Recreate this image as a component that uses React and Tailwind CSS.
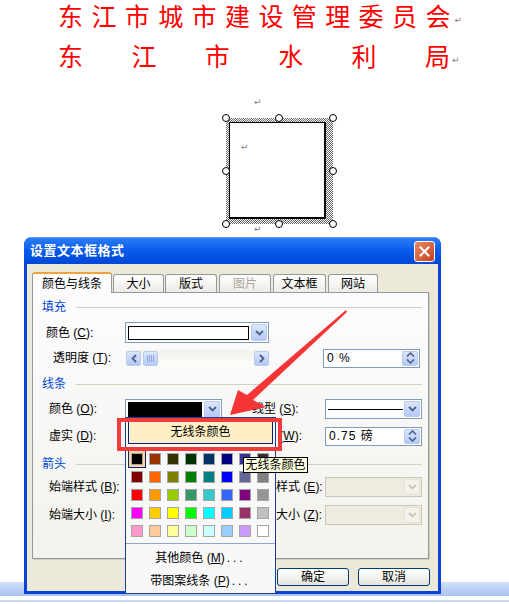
import React from 'react';

const CJK = "font-[family-name:'Liberation_Sans','Noto_Sans_CJK_SC',sans-serif]";

const PALETTE = [
  ['#000000', '#993300', '#333300', '#003300', '#003366', '#000080', '#333399', '#333333'],
  ['#800000', '#FF6600', '#808000', '#008000', '#008080', '#0000FF', '#666699', '#808080'],
  ['#FF0000', '#FF9900', '#99CC00', '#339966', '#33CCCC', '#3366FF', '#800080', '#969696'],
  ['#FF00FF', '#FFCC00', '#FFFF00', '#00FF00', '#00FFFF', '#00CCFF', '#993366', '#C0C0C0'],
  ['#FF99CC', '#FFCC99', '#FFFF99', '#CCFFCC', '#CCFFFF', '#99CCFF', '#CC99FF', '#FFFFFF'],
];

function Ret({ className = '' }) {
  return (
    <span className={`font-[family-name:'DejaVu_Sans',sans-serif] text-[9px] leading-none text-[#808080] ${className}`}>↵</span>
  );
}

function Chevron({ disabled }) {
  return (
    <svg width="9" height="6" viewBox="0 0 9 6">
      <path d="M1 1 L4.5 4.5 L8 1" fill="none" stroke={disabled ? '#C9C7BA' : '#4D6185'} strokeWidth="1.8" />
    </svg>
  );
}

function DropBtn({ disabled }) {
  return (
    <div
      className={`w-[16px] h-full rounded-[2px] border flex items-center justify-center ${
        disabled
          ? 'border-[#E3E1D5] bg-[#F3F2EC]'
          : 'border-[#BAC9EE] bg-gradient-to-b from-[#DCE7FE] to-[#B3C8F7]'
      }`}
    >
      <Chevron disabled={disabled} />
    </div>
  );
}

function SpinBtn() {
  return (
    <div className="w-[16px] h-full rounded-[2px] border border-[#BAC9EE] bg-gradient-to-b from-[#DCE7FE] to-[#B3C8F7] flex flex-col items-center justify-center gap-[2px]">
      <svg width="9" height="5" viewBox="0 0 9 5"><path d="M1 4.5 L4.5 1 L8 4.5" fill="none" stroke="#4D6185" strokeWidth="1.6" /></svg>
      <svg width="9" height="5" viewBox="0 0 9 5"><path d="M1 0.5 L4.5 4 L8 0.5" fill="none" stroke="#4D6185" strokeWidth="1.6" /></svg>
    </div>
  );
}

function Label({ text, k, className = '' }) {
  return (
    <span className={`text-[12px] text-black whitespace-nowrap ${className}`}>
      {text} (<u>{k}</u>):
    </span>
  );
}

function Section({ title }) {
  return (
    <div className="flex items-center h-[16px]">
      <span className="text-[12px] text-[#0046D5]">{title}</span>
      <div className="flex-1 h-px bg-[#D0D0BF] ml-[10px]" />
    </div>
  );
}

function Combo({ w, disabled, children }) {
  return (
    <div
      className={`h-[20px] border flex items-stretch p-[1px] ${w} ${
        disabled ? 'border-[#C9C7BA] bg-[#EEEBE0]' : 'border-[#7F9DB9] bg-white'
      }`}
    >
      <div className="flex-1 flex items-center px-[1px]">{children}</div>
      <DropBtn disabled={disabled} />
    </div>
  );
}

function Spin({ value }) {
  return (
    <div className="w-[97px] h-[19px] border border-[#7F9DB9] bg-white flex items-stretch p-[1px]">
      <div className="flex-1 flex items-center pl-[2px] text-[12px] tracking-[1px]">{value}</div>
      <SpinBtn />
    </div>
  );
}

function Tab({ label, w, active, disabled }) {
  if (active) {
    return (
      <div className={`${w} h-[21px] rounded-t-[3px] border border-b-0 border-[#919B9C] border-t-2 border-t-[#F2A23C] bg-[#FCFCFE] relative z-10 -mb-px flex items-center justify-center text-[12px]`}>
        {label}
      </div>
    );
  }
  return (
    <div
      className={`${w} h-[18px] rounded-t-[3px] border border-b-0 border-[#919B9C] bg-gradient-to-b from-white to-[#ECEBE6] flex items-center justify-center text-[12px] ${
        disabled ? 'text-[#ACA899]' : 'text-black'
      }`}
    >
      {label}
    </div>
  );
}

function Dialog() {
  return (
    <div className="absolute left-[24px] top-[237px] w-[417px] h-[357px] rounded-t-[8px] overflow-hidden bg-[#0842D6] flex flex-col">
      {/* title bar */}
      <div className="h-[27px] flex items-center justify-between bg-gradient-to-b from-[#2C7CF5] via-[#0659EC] to-[#0148D6] border-t border-[#5CA0FF]">
        <span className="pl-[6px] text-white font-bold text-[13px] tracking-[0.5px]">设置文本框格式</span>
        <div className="mr-[6px] w-[21px] h-[21px] rounded-[3px] border border-white bg-gradient-to-br from-[#E98866] to-[#C4401B] flex items-center justify-center">
          <svg width="11" height="11" viewBox="0 0 11 11">
            <path d="M1.5 1.5 L9.5 9.5 M9.5 1.5 L1.5 9.5" stroke="white" strokeWidth="2" strokeLinecap="square" />
          </svg>
        </div>
      </div>

      {/* body */}
      <div className="flex-1 mx-[3px] mb-[3px] bg-[#ECE9D8] pt-[7px] px-[5px]">
        <div className="flex items-end gap-[1px] h-[21px]">
          <Tab label="颜色与线条" w="w-[80px]" active />
          <Tab label="大小" w="w-[51px]" />
          <Tab label="版式" w="w-[52px]" />
          <Tab label="图片" w="w-[52px] ml-[1px]" disabled />
          <Tab label="文本框" w="w-[53px] ml-[1px]" />
          <Tab label="网站" w="w-[50px] ml-[1px]" />
        </div>

        <div className="h-[267px] w-[397px] border border-[#919B9C] bg-gradient-to-b from-[#FCFCFE] to-[#F3F2EC] shadow-[1px_1px_0_#D0CEBF] pt-[6px] pl-[9px] pr-[6px]">
          <Section title="填充" />
          <div className="flex items-center h-[21px] mt-[7px] pl-[4px]">
            <Label text="颜色" k="C" className="w-[79px]" />
            <div className="w-[144px] h-[21px] border border-[#7F9DB9] bg-white flex items-center p-[1px] gap-[2px]">
              <div className="flex-1 h-[14px] ml-[1px] border border-black bg-white" />
              <DropBtn />
            </div>
          </div>
          <div className="flex items-center h-[18px] mt-[6px] pl-[4px]">
            <Label text="透明度" k="T" className="w-[79px] pl-[7px]" />
            <div className="w-[145px] h-[17px] flex items-stretch gap-[2px] bg-gradient-to-b from-[#F3F1EC] to-[#FEFEFB] p-px">
              <div className="w-[15px] rounded-[2px] border border-[#BAC9EE] bg-gradient-to-b from-[#DCE7FE] to-[#B3C8F7] flex items-center justify-center">
                <svg width="6" height="9" viewBox="0 0 6 9"><path d="M5 1 L1.5 4.5 L5 8" fill="none" stroke="#4D6185" strokeWidth="1.8" /></svg>
              </div>
              <div className="w-[15px] rounded-[2px] border border-[#BAC9EE] bg-gradient-to-b from-[#DCE7FE] to-[#B8CCF8] flex items-center justify-center gap-[1px]">
                <div className="w-px h-[7px] bg-[#8FA5DD]" />
                <div className="w-px h-[7px] bg-[#8FA5DD]" />
                <div className="w-px h-[7px] bg-[#8FA5DD]" />
                <div className="w-px h-[7px] bg-[#8FA5DD]" />
              </div>
              <div className="flex-1" />
              <div className="w-[15px] rounded-[2px] border border-[#BAC9EE] bg-gradient-to-b from-[#DCE7FE] to-[#B3C8F7] flex items-center justify-center">
                <svg width="6" height="9" viewBox="0 0 6 9"><path d="M1 1 L4.5 4.5 L1 8" fill="none" stroke="#4D6185" strokeWidth="1.8" /></svg>
              </div>
            </div>
            <div className="ml-[53px]">
              <Spin value="0 %" />
            </div>
          </div>

          <div className="mt-[9px]">
            <Section title="线条" />
          </div>
          <div className="flex items-center h-[20px] mt-[7px] pl-[7px]">
            <Label text="颜色" k="O" className="w-[76px]" />
            <div className="w-[97px] h-[21px] border border-[#7F9DB9] bg-white flex items-center p-[1px] gap-[2px]">
              <div className="flex-1 h-[15px] ml-[1px] bg-black" />
              <DropBtn />
            </div>
            <Label text="线型" k="S" className="w-[73px] ml-[30px]" />
            <Combo w="w-[97px]">
              <div className="w-full h-px bg-black" />
            </Combo>
          </div>
          <div className="flex items-center h-[20px] mt-[7px] pl-[7px]">
            <Label text="虚实" k="D" className="w-[76px]" />
            <Combo w="w-[97px]" />
            <Label text="粗细" k="W" className="w-[73px] ml-[30px]" />
            <Spin value="0.75 磅" />
          </div>

          <div className="mt-[10px]">
            <Section title="箭头" />
          </div>
          <div className="flex items-center h-[20px] mt-[5px] pl-[7px]">
            <Label text="始端样式" k="B" className="w-[76px]" />
            <Combo w="w-[97px]" disabled />
            <Label text="末端样式" k="E" className="w-[73px] ml-[30px]" />
            <Combo w="w-[97px]" disabled />
          </div>
          <div className="flex items-center h-[20px] mt-[8px] pl-[7px]">
            <Label text="始端大小" k="I" className="w-[76px]" />
            <Combo w="w-[97px]" disabled />
            <Label text="末端大小" k="Z" className="w-[73px] ml-[30px]" />
            <Combo w="w-[97px]" disabled />
          </div>
        </div>

        <div className="flex justify-end gap-[9px] pr-[3px] mt-[9px]">
          {['确定', '取消'].map((t) => (
            <div
              key={t}
              className="w-[72px] h-[18px] rounded-[3px] border border-[#003C74] bg-gradient-to-b from-white via-[#F4F4F0] to-[#E3E2DA] flex items-center justify-center text-[12px]"
            >
              {t}
            </div>
          ))}
        </div>
      </div>
    </div>
  );
}

function ColorPopup() {
  return (
    <div className="absolute left-[125px] top-[417px] w-[151px] h-[177px] border border-[#1C3F94] bg-[#F8F8F8] flex flex-col">
      <div className="mx-[2px] mt-[2px] h-[24px] border border-[#0A1F7A] bg-[#FFEFC6] flex items-center justify-center text-[12px]">
        无线条颜色
      </div>
      <div className="mt-[6px] ml-[2px] grid grid-cols-[repeat(8,18px)] grid-rows-[repeat(5,18px)]">
        {PALETTE.flat().map((c, i) => (
          <div
            key={i}
            className={`flex items-center justify-center ${i === 0 ? 'border border-[#0A246A] bg-[#FFD49A]' : ''}`}
          >
            <div className="w-[12px] h-[12px] border border-[#A6A6A6]" style={{ background: c }} />
          </div>
        ))}
      </div>
      <div className="mt-[3px] h-px bg-[#8EA4D4]" />
      <div className="mt-[2px] h-[23px] flex items-center justify-center text-[12px]">
        其他颜色 (<u>M</u>)<span className="tracking-[3px] ml-[2px]">...</span>
      </div>
      <div className="h-[23px] flex items-center justify-center text-[12px]">
        带图案线条 (<u>P</u>)<span className="tracking-[3px] ml-[2px]">...</span>
      </div>
    </div>
  );
}

function TextBoxFrame() {
  const handles = [
    'left-[-4px] top-[-4px]',
    'left-[49px] top-[-4px]',
    'right-[-4px] top-[-4px]',
    'left-[-4px] top-[49px]',
    'right-[-4px] top-[49px]',
    'left-[-4px] bottom-[-4px]',
    'left-[49px] bottom-[-4px]',
    'right-[-4px] bottom-[-4px]',
  ];
  return (
    <div className="relative ml-[226px] w-[107px] h-[106px] bg-[repeating-conic-gradient(#666_0_25%,#fff_0_50%)] bg-[length:2px_2px] pt-[4px] pl-[3px] pr-[7px] pb-[5px]">
      <div className="w-full h-full bg-white border border-black border-r-2 border-b-2 pl-[11px] pt-[10px]">
        <Ret />
      </div>
      {handles.map((h, i) => (
        <div key={i} className={`absolute ${h} w-[8px] h-[8px] rounded-full border border-black bg-white`} />
      ))}
    </div>
  );
}

export default function App() {
  return (
    <div className={`relative w-[509px] h-[604px] overflow-hidden bg-white flex flex-col ${CJK}`}>
      {/* document */}
      <div className="h-[31px] flex items-center pl-[58px] font-[family-name:'Noto_Sans_CJK_SC',sans-serif] text-[25px] leading-[31px] text-[#FF0000]">
        <span className="tracking-[8.4px]">东江市城市建设管理委员</span>
        <span>会</span>
        <Ret className="ml-[4px] mt-[10px]" />
      </div>
      <div className="h-[31px] mt-[9px] flex items-center pl-[58px] font-[family-name:'Noto_Sans_CJK_SC',sans-serif] text-[25px] leading-[31px] text-[#FF0000]">
        <div className="w-[392px] flex justify-between">
          {['东', '江', '市', '水', '利', '局'].map((c) => (
            <span key={c}>{c}</span>
          ))}
        </div>
        <Ret className="ml-[2px] mt-[10px]" />
      </div>
      <div className="mt-[26px] h-[10px] pl-[254px] flex items-center">
        <Ret />
      </div>
      <div className="mt-[11px]">
        <TextBoxFrame />
      </div>
      <div className="pl-[254px] h-[10px] flex items-center">
        <Ret />
      </div>

      {/* status strip behind the dialog */}
      <div className="mt-auto h-[22px] flex flex-col">
        <div className="h-[14px] bg-gradient-to-b from-[#D3E0FA] to-[#A9C2F0]" />
        <div className="h-[4px]" />
        <div className="h-[2px] bg-[#C9D7F3]" />
      </div>

      <Dialog />
      <ColorPopup />

      {/* tooltip */}
      <div className="absolute left-[243px] top-[457px] w-[65px] h-[16px] border border-black bg-[#FFFFE1] flex items-center justify-center text-[12px]">
        无线条颜色
      </div>

      {/* red highlight box */}
      <div className="absolute left-[117px] top-[418px] w-[165px] h-[33px] border-[4px] border-[#F23B3B]" />

      {/* red arrow */}
      <svg className="absolute left-0 top-0 pointer-events-none" width="509" height="604" viewBox="0 0 509 604">
        <polygon
          points="230,415 238,390 247,395 346,310 347,312 253,400 266,407"
          fill="#F53535"
        />
      </svg>
    </div>
  );
}
